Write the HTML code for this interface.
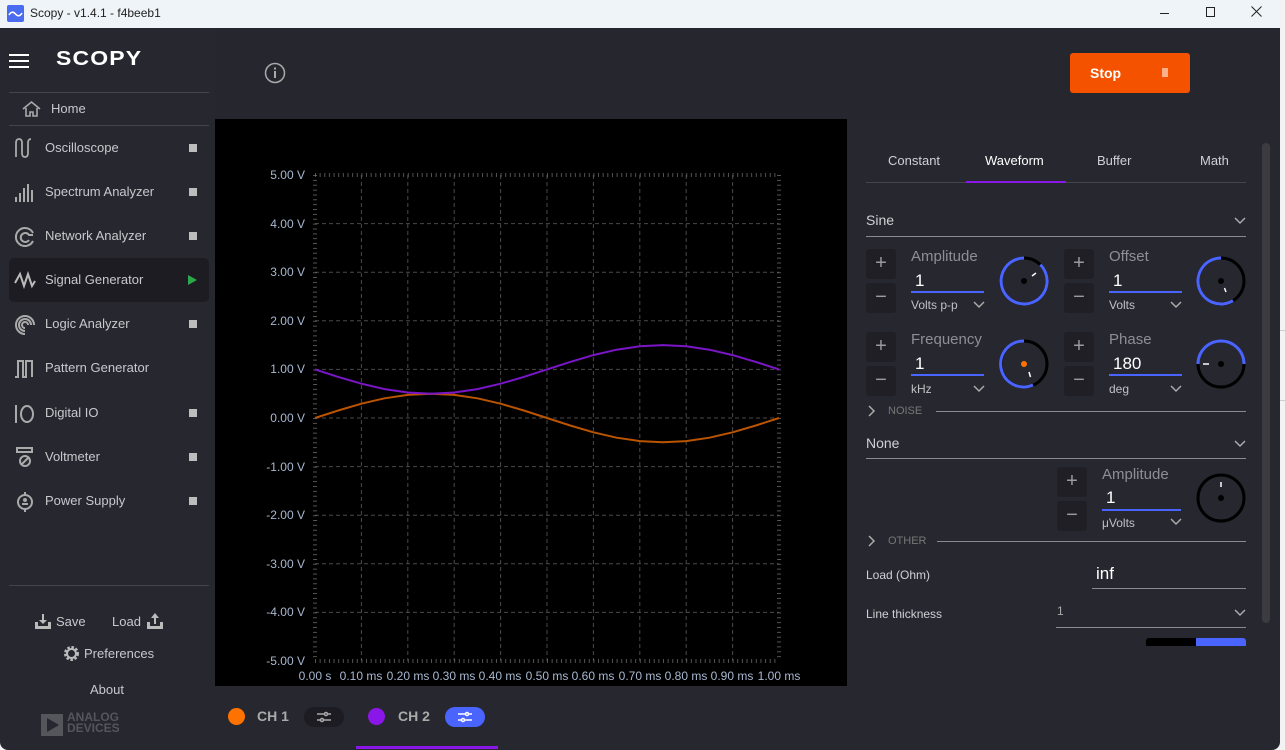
<!DOCTYPE html>
<html><head><meta charset="utf-8">
<style>
*{margin:0;padding:0;box-sizing:border-box}
body{width:1285px;height:750px;overflow:hidden;background:#f3f3f3;font-family:"Liberation Sans","DejaVu Sans",sans-serif;position:relative}
.a{position:absolute}
.t{position:absolute;white-space:nowrap}
.side .t{color:#c8c8cc;font-size:13px}
.sq{position:absolute;width:8px;height:8px;background:#bdbdbd;left:189px}
.btn{position:absolute;width:30px;height:30px;background:#1f1f25;border-radius:3px;color:#9a9aa0;font-size:20px;text-align:center;line-height:28px}
.lbl{position:absolute;color:#8e8e95;font-size:15px}
.val{position:absolute;color:#fff;font-size:17px}
.ul{position:absolute;height:2px;background:#4a64ff}
.unit{position:absolute;color:#c0c0c5;font-size:12px}
.line{position:absolute;height:1px;background:#8a8a90}
.rp .t{color:#d0d0d4}
.ch{position:absolute}
</style></head><body>
<!-- title bar -->
<div class="a" style="left:0;top:0;width:1280px;height:28px;background:#eef4f7"></div>
<svg class="a" style="left:7px;top:5px" width="17" height="17"><rect width="17" height="17" rx="2" fill="#4a6cf0"/><path d="M2 10 Q5 5 8.5 9 T15 8" stroke="#fff" stroke-width="1.6" fill="none"/></svg>
<div class="t" style="left:30px;top:6px;font-size:12px;color:#222">Scopy - v1.4.1 - f4beeb1</div>
<div class="a" style="left:1160px;top:13px;width:9px;height:1px;background:#222"></div>
<div class="a" style="left:1206px;top:7px;width:9px;height:10px;border:1px solid #222"></div>
<svg class="a" style="left:1251px;top:6px" width="11" height="11"><path d="M0.5 0.5L10.5 10.5M10.5 0.5L0.5 10.5" stroke="#222" stroke-width="1"/></svg>
<!-- main bg -->
<div class="a" style="left:0;top:28px;width:1280px;height:722px;background:#272730;border-radius:0 0 8px 8px"></div>
<div class="a" style="left:1280px;top:330px;width:5px;height:1px;background:#ccc"></div>
<div class="a" style="left:1280px;top:400px;width:5px;height:1px;background:#ccc"></div>
<!-- sidebar -->
<div class="side">
<div class="a" style="left:9px;top:54px;width:20px;height:2px;background:#fff"></div>
<div class="a" style="left:9px;top:60px;width:20px;height:2px;background:#fff"></div>
<div class="a" style="left:9px;top:66px;width:20px;height:2px;background:#fff"></div>
<div class="t" style="left:56px;top:48px;font-size:20px;font-weight:bold;color:#fff;letter-spacing:1px;transform:scaleX(1.15);transform-origin:left">SCOPY</div>
<div class="a" style="left:9px;top:92px;width:200px;height:1px;background:#44444c"></div>
<svg class="a" style="left:21px;top:100px" width="21" height="18"><path d="M2 9 L10.5 2 L19 9 M5 8 V16 H9 V12 H12 V16 H16 V8" stroke="#aaa" stroke-width="1.6" fill="none"/></svg>
<div class="t" style="left:51px;top:101px">Home</div>
<div class="a" style="left:9px;top:125px;width:200px;height:1px;background:#44444c"></div>
<svg class="a" style="left:14px;top:138px" width="22" height="20" fill="none" stroke="#aaa" stroke-width="1.8"><path d="M2 19 V5 Q2 1 5 1 Q8 1 8 5 V15 Q8 19 11 19 Q14 19 14 15 V5 Q14 1 17 1"/></svg>
<div class="t" style="left:45px;top:140px">Oscilloscope</div><div class="sq" style="top:144px"></div>
<svg class="a" style="left:14px;top:182px" width="22" height="20" fill="#aaa"><rect x="1" y="15" width="2" height="5"/><rect x="5" y="11" width="2" height="9"/><rect x="9" y="6" width="2" height="14"/><rect x="13" y="2" width="2" height="18"/><rect x="17" y="8" width="2" height="12"/></svg>
<div class="t" style="left:45px;top:184px">Spectrum Analyzer</div><div class="sq" style="top:188px"></div>
<svg class="a" style="left:14px;top:226px" width="22" height="22" fill="none" stroke="#aaa" stroke-width="2"><path d="M19 15 A9 9 0 1 1 19 7"/><path d="M15 14 A4.5 4.5 0 1 1 15 9 H19"/></svg>
<div class="t" style="left:45px;top:228px">Network Analyzer</div><div class="sq" style="top:232px"></div>
<div class="a" style="left:9px;top:258px;width:200px;height:44px;background:#1c1c22;border-radius:5px"></div>
<svg class="a" style="left:14px;top:270px" width="22" height="20" fill="none" stroke="#bbb" stroke-width="2"><path d="M1 13 L6 4 L10 16 L14 4 L18 16 L21 11"/></svg>
<div class="t" style="left:45px;top:272px">Signal Generator</div>
<svg class="a" style="left:188px;top:275px" width="9" height="10"><path d="M0 0 L9 5 L0 10Z" fill="#2ca84a"/></svg>
<svg class="a" style="left:14px;top:314px" width="22" height="22" fill="none" stroke="#aaa" stroke-width="2"><path d="M11 20 A9 9 0 1 1 20 11"/><path d="M17 11 A6 6 0 1 0 11 17 M11 14 A3 3 0 1 1 14 11"/></svg>
<div class="t" style="left:45px;top:316px">Logic Analyzer</div><div class="sq" style="top:320px"></div>
<svg class="a" style="left:14px;top:359px" width="22" height="20" fill="none" stroke="#aaa" stroke-width="2"><path d="M1 18 H4 V2 H9 V18 H12 V2 H18 V18"/></svg>
<div class="t" style="left:45px;top:360px">Pattern Generator</div>
<svg class="a" style="left:14px;top:404px" width="22" height="20" fill="none" stroke="#aaa" stroke-width="2"><path d="M2 1 V19"/><ellipse cx="13" cy="10" rx="6" ry="8"/></svg>
<div class="t" style="left:45px;top:405px">Digital IO</div><div class="sq" style="top:409px"></div>
<svg class="a" style="left:15px;top:447px" width="20" height="22" fill="none" stroke="#aaa" stroke-width="2"><rect x="2" y="1" width="15" height="4"/><circle cx="10" cy="14" r="5"/><path d="M7 17 L13 11"/></svg>
<div class="t" style="left:45px;top:449px">Voltmeter</div><div class="sq" style="top:453px"></div>
<svg class="a" style="left:15px;top:491px" width="20" height="22" fill="none" stroke="#aaa" stroke-width="2"><circle cx="10" cy="11" r="7"/><path d="M10 1 V4 M10 18 V21 M7 13 H13"/><circle cx="10" cy="9" r="1" fill="#aaa"/></svg>
<div class="t" style="left:45px;top:493px">Power Supply</div><div class="sq" style="top:497px"></div>
<div class="a" style="left:9px;top:585px;width:200px;height:1px;background:#44444c"></div>
<svg class="a" style="left:35px;top:613px" width="16" height="16" fill="#bbb"><path d="M0 9 H3 V13 H13 V9 H16 V16 H0Z"/><path d="M7 1 H9 V7 H12 L8 11 L4 7 H7Z"/></svg>
<div class="t" style="left:56px;top:614px">Save</div>
<div class="t" style="left:112px;top:614px">Load</div>
<svg class="a" style="left:147px;top:612px" width="16" height="17" fill="#bbb"><path d="M0 10 H3 V14 H13 V10 H16 V17 H0Z"/><path d="M7 12 H9 V6 H12 L8 1 L4 6 H7Z"/></svg>
<svg class="a" style="left:63px;top:645px" width="17" height="17"><circle cx="8.5" cy="8.5" r="6" fill="none" stroke="#bbb" stroke-width="3" stroke-dasharray="2.4 1.6"/><circle cx="8.5" cy="8.5" r="4.5" fill="none" stroke="#bbb" stroke-width="2"/></svg>
<div class="t" style="left:84px;top:646px">Preferences</div>
<div class="t" style="left:90px;top:682px">About</div>
<svg class="a" style="left:41px;top:714px" width="22" height="22"><rect width="22" height="22" fill="#55555c"/><path d="M6 4 L18 11 L6 18Z" fill="#272730"/></svg>
<div class="t" style="left:67px;top:712px;font-size:12px;line-height:11px;font-weight:bold;color:#55555c;letter-spacing:0">ANALOG<br>DEVICES</div>
</div>
<!-- top bar -->
<div class="a" style="left:215px;top:28px;width:1065px;height:91px;background:#26262f"></div>
<svg class="a" style="left:264px;top:62px" width="22" height="22"><circle cx="11" cy="11" r="9.5" fill="none" stroke="#aaa" stroke-width="1.5"/><rect x="10" y="9" width="2" height="7" fill="#aaa"/><rect x="10" y="5.5" width="2" height="2" fill="#aaa"/></svg>
<div class="a" style="left:1070px;top:53px;width:120px;height:40px;background:#f55200;border-radius:3px"></div>
<div class="t" style="left:1090px;top:65px;color:#fff;font-size:14px;font-weight:bold">Stop</div>
<div class="a" style="left:1162px;top:68px;width:6px;height:9px;background:#ffb08a"></div>
<!-- plot -->
<svg class="a" style="left:215px;top:119px" width="632" height="567" viewBox="215 119 632 567">
<rect x="215" y="119" width="632" height="567" fill="#000"/>
<g stroke="#4a4a4a" stroke-width="1" stroke-dasharray="4 3">
<path d="M361.4 175V661M407.8 175V661M454.2 175V661M500.6 175V661M547 175V661M593.4 175V661M639.8 175V661M686.2 175V661M732.6 175V661"/>
<path d="M315 223.6H779M315 272.2H779M315 320.8H779M315 369.4H779M315 418H779M315 466.6H779M315 515.2H779M315 563.8H779M315 612.4H779"/>
</g>
<g stroke="#777" stroke-width="1">
<path d="M315 175V661M779 175V661" stroke-dasharray="1 3.86" stroke-width="4" opacity=".7"/>
<path d="M315 175H779M315 661H779" stroke-dasharray="1 3.64" stroke-width="4" opacity=".7"/>
</g>
<polyline fill="none" stroke="#ba5400" stroke-width="2" points="315,418 338.2,410.5 361.4,403.7 384.6,398.3 407.8,394.9 431,393.7 454.2,394.9 477.4,398.3 500.6,403.7 523.8,410.5 547,418 570.2,425.5 593.4,432.3 616.6,437.7 639.8,441.1 663,442.3 686.2,441.1 709.4,437.7 732.6,432.3 755.8,425.5 779,418"/>
<polyline fill="none" stroke="#7a16c8" stroke-width="2" points="315,369.4 338.2,376.9 361.4,383.7 384.6,389.1 407.8,392.5 431,393.7 454.2,392.5 477.4,389.1 500.6,383.7 523.8,376.9 547,369.4 570.2,361.9 593.4,355.1 616.6,349.7 639.8,346.3 663,345.1 686.2,346.3 709.4,349.7 732.6,355.1 755.8,361.9 779,369.4"/>
<g fill="#a8b8d0" font-size="12" font-family="Liberation Sans,sans-serif" text-anchor="end">
<text x="305" y="179">5.00 V</text><text x="305" y="228">4.00 V</text><text x="305" y="276">3.00 V</text><text x="305" y="325">2.00 V</text><text x="305" y="373">1.00 V</text><text x="305" y="422">0.00 V</text><text x="305" y="471">-1.00 V</text><text x="305" y="519">-2.00 V</text><text x="305" y="568">-3.00 V</text><text x="305" y="616">-4.00 V</text><text x="305" y="665">-5.00 V</text>
</g>
<g fill="#a8b8d0" font-size="12" font-family="Liberation Sans,sans-serif" text-anchor="middle">
<text x="315" y="680">0.00 s</text><text x="361" y="680">0.10 ms</text><text x="408" y="680">0.20 ms</text><text x="454" y="680">0.30 ms</text><text x="500" y="680">0.40 ms</text><text x="547" y="680">0.50 ms</text><text x="593" y="680">0.60 ms</text><text x="640" y="680">0.70 ms</text><text x="686" y="680">0.80 ms</text><text x="732" y="680">0.90 ms</text><text x="779" y="680">1.00 ms</text>
</g>
</svg>
<!-- channel bar -->
<div class="a" style="left:215px;top:686px;width:632px;height:64px;background:#272730"></div>
<div class="a" style="left:228px;top:708px;width:17px;height:17px;border-radius:50%;background:#ff7200"></div>
<div class="t" style="left:257px;top:708px;color:#aaa;font-size:14px;font-weight:bold">CH 1</div>
<div class="a" style="left:304px;top:707px;width:40px;height:20px;border-radius:10px;background:#1c1c22"></div>
<svg class="a" style="left:316px;top:711px" width="16" height="12" stroke="#aaa" stroke-width="1.5"><path d="M1 3H15M1 9H15"/><circle cx="10" cy="3" r="1.5" fill="#1c1c22"/><circle cx="6" cy="9" r="1.5" fill="#1c1c22"/></svg>
<div class="a" style="left:368px;top:708px;width:17px;height:17px;border-radius:50%;background:#8b16e8"></div>
<div class="t" style="left:398px;top:708px;color:#aaa;font-size:14px;font-weight:bold">CH 2</div>
<div class="a" style="left:445px;top:707px;width:40px;height:20px;border-radius:10px;background:#4a64ff"></div>
<svg class="a" style="left:457px;top:711px" width="16" height="12" stroke="#fff" stroke-width="1.5"><path d="M1 3H15M1 9H15"/><circle cx="10" cy="3" r="1.5" fill="#4a64ff"/><circle cx="6" cy="9" r="1.5" fill="#4a64ff"/></svg>
<div class="a" style="left:356px;top:746px;width:142px;height:3px;background:#8b16e8"></div>
<!-- right panel -->
<div class="rp">
<div class="a" style="left:847px;top:119px;width:433px;height:567px;background:#272730"></div>
<div class="a" style="left:1262px;top:143px;width:8px;height:480px;border-radius:4px;background:#3c3c40"></div>
<div class="t" style="left:888px;top:153px;font-size:13px">Constant</div>
<div class="t" style="left:985px;top:153px;font-size:13px;color:#fff">Waveform</div>
<div class="t" style="left:1097px;top:153px;font-size:13px">Buffer</div>
<div class="t" style="left:1200px;top:153px;font-size:13px">Math</div>
<div class="a" style="left:866px;top:182px;width:380px;height:1px;background:#44444c"></div>
<div class="a" style="left:966px;top:181px;width:100px;height:2px;background:#8b16e8"></div>
<div class="t" style="left:866px;top:212px;font-size:14px">Sine</div>
<div class="line" style="left:866px;top:236px;width:380px"></div>

<div class="btn" style="left:866px;top:249px">+</div><div class="btn" style="left:866px;top:283px">−</div>
<div class="lbl" style="left:911px;top:248px">Amplitude</div><div class="val" style="left:915px;top:271px">1</div>
<div class="ul" style="left:911px;top:291px;width:73px"></div><div class="unit" style="left:911px;top:298px">Volts p-p</div>

<div class="btn" style="left:1064px;top:249px">+</div><div class="btn" style="left:1064px;top:283px">−</div>
<div class="lbl" style="left:1109px;top:248px">Offset</div><div class="val" style="left:1113px;top:271px">1</div>
<div class="ul" style="left:1109px;top:291px;width:73px"></div><div class="unit" style="left:1109px;top:298px">Volts</div>

<div class="btn" style="left:866px;top:332px">+</div><div class="btn" style="left:866px;top:366px">−</div>
<div class="lbl" style="left:911px;top:331px">Frequency</div><div class="val" style="left:915px;top:354px">1</div>
<div class="ul" style="left:911px;top:374px;width:73px"></div><div class="unit" style="left:911px;top:382px">kHz</div>

<div class="btn" style="left:1064px;top:332px">+</div><div class="btn" style="left:1064px;top:366px">−</div>
<div class="lbl" style="left:1109px;top:331px">Phase</div><div class="val" style="left:1113px;top:354px">180</div>
<div class="ul" style="left:1109px;top:374px;width:73px"></div><div class="unit" style="left:1109px;top:382px">deg</div>

<svg class="a" style="left:847px;top:119px" width="433" height="567" viewBox="847 119 433 567" fill="none">
<g stroke="#aaa" stroke-width="1.5">
<path d="M1235 218L1240 223L1245 218"/>
<path d="M974 302L979 307L984 302"/>
<path d="M1171 302L1176 307L1181 302"/>
<path d="M974 386L979 391L984 386"/>
<path d="M1171 386L1176 391L1181 386"/>
<path d="M1235 441L1240 446L1245 441"/>
<path d="M1171 519L1176 524L1181 519"/>
<path d="M1235 610L1240 615L1245 610"/>
</g>
<circle cx="1024" cy="281" r="23" stroke="#000" stroke-width="3"/>
<path d="M1040.3 264.7 A23 23 0 1 1 1024 258" stroke="#4a64ff" stroke-width="3"/>
<path d="M1032 276 L1036 273" stroke="#fff" stroke-width="1.5"/><circle cx="1024" cy="281" r="3" fill="#000"/>
<circle cx="1221" cy="281" r="23" stroke="#000" stroke-width="3"/>
<path d="M1233 300.6 A23 23 0 1 1 1221 258" stroke="#4a64ff" stroke-width="3"/>
<path d="M1224.5 288 L1226 292" stroke="#fff" stroke-width="1.5"/><circle cx="1221" cy="281" r="3" fill="#000"/>
<circle cx="1024" cy="364" r="23" stroke="#000" stroke-width="3"/>
<path d="M1033 385 A23 23 0 1 1 1024 341" stroke="#4a64ff" stroke-width="3"/>
<path d="M1029 372 L1030.5 377" stroke="#fff" stroke-width="1.5"/><circle cx="1024" cy="364" r="3" fill="#ff7200"/>
<circle cx="1221" cy="364" r="23" stroke="#000" stroke-width="3"/>
<path d="M1198 364 A23 23 0 0 1 1244 364" stroke="#4a64ff" stroke-width="3"/>
<path d="M1203 364 L1209 364" stroke="#fff" stroke-width="1.5"/><circle cx="1221" cy="364" r="3" fill="#000"/>
<circle cx="1221" cy="498" r="23" stroke="#000" stroke-width="3"/>
<path d="M1221 482 L1221 487" stroke="#fff" stroke-width="1.5"/><circle cx="1221" cy="498" r="3" fill="#000"/>
<path d="M869 406 L874 411 L869 416" stroke="#aaa" stroke-width="1.5"/>
<path d="M869 536 L874 541 L869 546" stroke="#aaa" stroke-width="1.5"/>
</svg>
<div class="t" style="left:888px;top:405px;font-size:11px;color:#777">NOISE</div>
<div class="line" style="left:936px;top:411px;width:310px"></div>
<div class="t" style="left:866px;top:435px;font-size:14px">None</div>
<div class="line" style="left:866px;top:458px;width:380px"></div>

<div class="btn" style="left:1057px;top:467px">+</div><div class="btn" style="left:1057px;top:501px">−</div>
<div class="lbl" style="left:1102px;top:466px">Amplitude</div><div class="val" style="left:1106px;top:488px">1</div>
<div class="ul" style="left:1102px;top:509px;width:79px"></div><div class="unit" style="left:1102px;top:516px">μVolts</div>

<div class="t" style="left:888px;top:535px;font-size:11px;color:#777">OTHER</div>
<div class="line" style="left:937px;top:541px;width:309px"></div>
<div class="t" style="left:866px;top:568px;font-size:12px">Load (Ohm)</div>
<div class="t" style="left:1096px;top:564px;font-size:17px;color:#fff">inf</div>
<div class="line" style="left:1092px;top:588px;width:154px"></div>
<div class="t" style="left:866px;top:607px;font-size:12px">Line thickness</div>
<div class="t" style="left:1057px;top:604px;font-size:12px;color:#aaa">1</div>
<div class="line" style="left:1056px;top:627px;width:190px"></div>
<div class="a" style="left:1146px;top:638px;width:50px;height:8px;background:#000;border-radius:3px 0 0 0"></div>
<div class="a" style="left:1196px;top:638px;width:50px;height:8px;background:#4a64ff;border-radius:0 3px 0 0"></div>
</div>
</body></html>
